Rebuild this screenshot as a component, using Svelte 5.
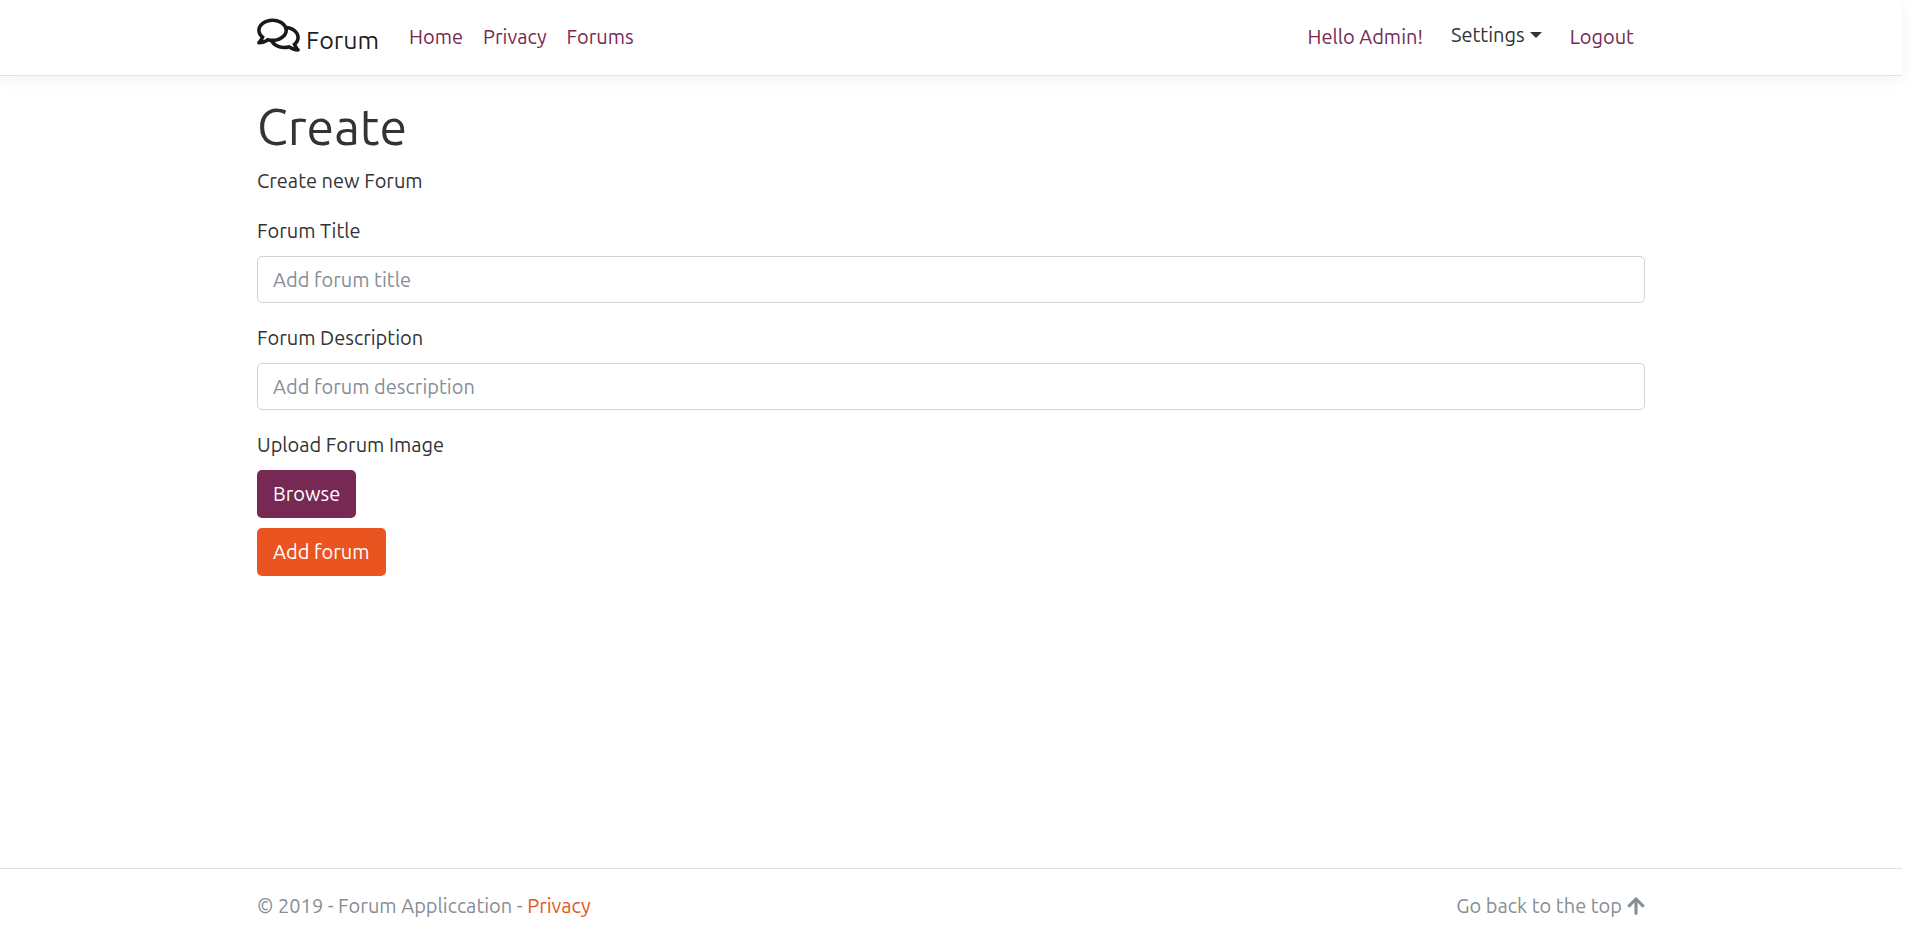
<script>
  const mainLinks = ['Home', 'Privacy', 'Forums'];
  let title = $state('');
  let description = $state('');
</script>

<div class="page">
  <header>
    <nav class="container" aria-label="Main">
      <a class="brand" href="#home">
        <svg viewBox="0 0 576 512" aria-hidden="true">
          <path d="M532 386.2c27.5-27.1 44-61.1 44-98.2 0-80-76.5-146.1-176.2-157.9C368.3 72.5 294.3 32 208 32 93.1 32 0 103.6 0 192c0 37 16.5 71 44 98.2-15.3 30.7-37.3 54.5-37.7 54.9-6.3 6.7-8.1 16.5-4.4 25 3.6 8.5 12 14 21.2 14 53.5 0 96.7-20.2 125.2-38.8 9.2 2.1 18.7 3.7 28.4 4.9C208.1 407.6 281.8 448 368 448c20.8 0 40.8-2.4 59.8-6.8C456.3 459.7 499.4 480 553 480c9.2 0 17.5-5.5 21.2-14 3.6-8.5 1.9-18.3-4.4-25-.4-.3-22.5-24.1-37.8-54.8zm-392.8-92.3L122.1 305c-14.1 9.1-28.5 16.3-43.1 21.4 2.7-4.7 5.4-9.7 8-14.8l15.5-31.1L77.7 256C64.2 242.6 48 220.7 48 192c0-60.7 73.3-112 160-112s160 51.3 160 112-73.3 112-160 112c-16.5 0-33-1.9-49-5.6l-19.8-4.5zM498.3 352l-24.7 24.4 15.5 31.1c2.6 5.1 5.3 10.1 8 14.8-14.6-5.1-29-12.3-43.1-21.4l-17.1-11.1-19.9 4.6c-16 3.7-32.5 5.6-49 5.6-54 0-102.2-20.1-131.3-49.7C338 339.5 416 272.9 416 192c0-3.4-.4-6.7-.7-10C479.7 196.5 528 238.8 528 288c0 28.7-16.2 50.6-29.7 64z" />
        </svg>
        <span>Forum</span>
      </a>
      <div class="links">
        {#each mainLinks as link}
          <a href="#{link.toLowerCase()}">{link}</a>
        {/each}
      </div>
      <div class="account">
        <a href="#profile">Hello Admin!</a>
        <button class="settings" type="button" aria-haspopup="true">Settings<span class="caret"></span></button>
        <button class="logout" type="button">Logout</button>
      </div>
    </nav>
  </header>

  <main>
    <div class="container">
      <h1>Create</h1>
      <p>Create new Forum</p>
      <form onsubmit={(e) => e.preventDefault()}>
        <div class="group">
          <label for="title">Forum Title</label>
          <input id="title" type="text" placeholder="Add forum title" bind:value={title} />
        </div>
        <div class="group">
          <label for="description">Forum Description</label>
          <input id="description" type="text" placeholder="Add forum description" bind:value={description} />
        </div>
        <div class="upload">
          <label for="image">Upload Forum Image</label>
          <label class="btn browse" for="image">Browse</label>
          <input id="image" class="file" type="file" accept="image/*" />
        </div>
        <button class="btn submit" type="submit">Add forum</button>
      </form>
    </div>
  </main>

  <footer>
    <div class="container">
      <span>© 2019 - Forum Appliccation - <a href="#privacy">Privacy</a></span>
      <a class="top" href="#top">
        Go back to the top
        <svg viewBox="0 0 448 512" aria-hidden="true">
          <path d="M34.9 289.5l-22.2-22.2c-9.4-9.4-9.4-24.6 0-33.9L207 39c9.4-9.4 24.6-9.4 33.9 0l194.3 194.3c9.4 9.4 9.4 24.6 0 33.9L413 289.4c-9.5 9.5-25 9.3-34.3-.4L264 168.6V456c0 13.3-10.7 24-24 24h-32c-13.3 0-24-10.7-24-24V168.6L69.2 289.1c-9.3 9.8-24.8 10-34.3.4z" />
        </svg>
      </a>
    </div>
  </footer>
</div>

<style>
  :global(body) {
    margin: 0;
    background: #fff;
  }

  .page {
    box-sizing: border-box;
    min-height: 100vh;
    padding-right: 18px;
    display: flex;
    flex-direction: column;
    overflow-x: hidden;
    font: 400 20px/30px Ubuntu, 'Noto Sans', 'Open Sans', sans-serif;
    color: #333;
  }

  .page * {
    box-sizing: border-box;
  }

  .container {
    width: 100%;
    max-width: 1428px;
    margin: 0 auto;
    padding: 0 20px;
  }

  a {
    color: #772953;
    text-decoration: none;
  }

  button {
    font: inherit;
    border: 0;
    padding: 0;
    background: none;
    color: inherit;
    cursor: pointer;
  }

  svg {
    fill: currentColor;
  }

  header {
    padding-bottom: 2px;
    border-bottom: 1px solid #dee2e6;
    box-shadow: 0 5px 15px rgba(0, 0, 0, 0.05);
  }

  nav {
    display: flex;
    align-items: center;
    height: 73px;
  }

  .brand {
    display: flex;
    align-items: flex-start;
    gap: 6px;
    margin-right: 30px;
    padding-top: 6px;
    color: rgba(0, 0, 0, 0.9);
    font-size: 25px;
    line-height: 48px;
  }

  .brand svg {
    width: 43px;
    height: 38px;
  }

  .links {
    display: flex;
    gap: 20px;
  }

  .account {
    display: flex;
    align-items: center;
    gap: 28px;
    margin-left: auto;
    padding-right: 11px;
  }

  .settings {
    display: flex;
    align-items: center;
    gap: 5px;
    padding-bottom: 3px;
  }

  .caret {
    border: 6px solid transparent;
    border-top-color: currentColor;
    border-bottom: 0;
  }

  .logout {
    color: #772953;
  }

  main {
    flex: 1;
    padding: 20px 0;
  }

  h1 {
    margin: 0 0 10px;
    font-size: 50px;
    line-height: 60px;
    font-weight: 400;
  }

  p {
    margin: 0 0 20px;
  }

  label {
    display: block;
    margin-bottom: 10px;
  }

  .group {
    margin-bottom: 20px;
  }

  input[type='text'] {
    display: block;
    width: 100%;
    height: 47px;
    padding: 0 15px;
    border: 1px solid #ced4da;
    border-radius: 5px;
    background: #fff;
    color: #495057;
    font: inherit;
  }

  input::placeholder {
    color: #868e96;
    opacity: 1;
  }

  .upload {
    position: relative;
  }

  .file {
    position: absolute;
    left: 0;
    bottom: 0;
    width: 1px;
    height: 1px;
    opacity: 0;
  }

  .btn {
    display: block;
    width: fit-content;
    height: 48px;
    padding: 0 16px;
    border-radius: 5px;
    color: #fff;
    line-height: 48px;
    cursor: pointer;
  }

  .browse {
    background: #772953;
  }

  .submit {
    background: #e95420;
  }

  footer {
    border-top: 1px solid #dee2e6;
    color: #868e96;
  }

  footer .container {
    display: flex;
    justify-content: space-between;
    line-height: 74px;
  }

  footer a {
    color: #e95420;
  }

  footer .top {
    display: flex;
    align-items: center;
    gap: 5px;
    color: inherit;
  }

  .top svg {
    width: 18px;
    height: 20px;
  }
</style>
